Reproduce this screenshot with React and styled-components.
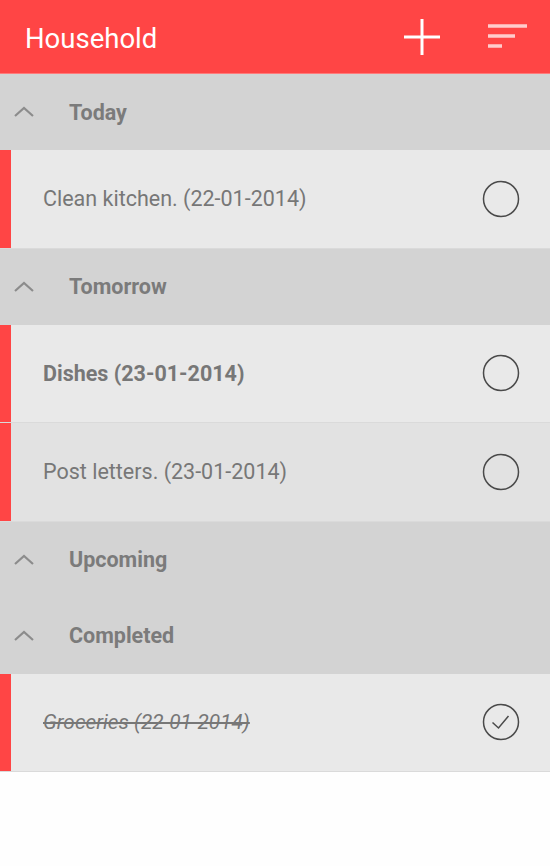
import React from "react"
import styled, { createGlobalStyle } from "styled-components"

const GlobalStyle = createGlobalStyle`
  body {
    margin: 0;
    background: #fefefe;
    font-family: Roboto, "Noto Sans", sans-serif;
  }
`

const Screen = styled.div`
  width: 550px;
  min-height: 866px;
  background: #fefefe;
`

const ActionBar = styled.header`
  height: 73px;
  background: #ff4545;
  border-bottom: 1px solid #ff7b7b;
  display: flex;
  align-items: center;
  padding: 0 23px 0 25px;
`

const Title = styled.h1`
  flex: 1;
  margin: 3px 0 0;
  color: #fff;
  font-size: 27.5px;
  font-weight: 400;
`

const ActionButton = styled.button`
  background: none;
  border: 0;
  padding: 0;
  margin-left: ${p => p.gap || 0}px;
  display: flex;
  align-items: center;
`

const GroupHeader = styled.div`
  height: 76px;
  background: #d3d3d3;
  display: flex;
  align-items: center;
  padding-left: 14px;
`

const GroupTitle = styled.span`
  margin-left: 35px;
  font-size: 21.5px;
  font-weight: 700;
  color: #7b7b7b;
`

const Task = styled.div`
  height: 97.5px;
  background: ${p => (p.pressed ? "#e2e2e2" : "#e9e9e9")};
  border-bottom: 1px solid #dadada;
  display: flex;
  align-items: center;
  padding-right: 30px;
`

const Stripe = styled.div`
  width: 11px;
  align-self: stretch;
  background: #ff4545;
  margin-right: 32px;
`

const TaskText = styled.span`
  flex: 1;
  font-size: ${p => (p.done ? 20.8 : 21.5)}px;
  color: #777;
  font-weight: ${p => (p.bold ? 700 : 400)};
  font-style: ${p => (p.done ? "italic" : "normal")};
  text-decoration: ${p => (p.done ? "line-through" : "none")};
`

const Chevron = () => (
  <svg width="20" height="12" viewBox="0 0 20 12">
    <path d="M1 10 L10 2 L19 10" fill="none" stroke="#8c8c8c" strokeWidth="2.2" />
  </svg>
)

const Check = ({ done }) => (
  <svg width="38" height="38" viewBox="0 0 38 38">
    <circle cx="19" cy="19" r="17.5" fill="none" stroke="#4a4a4a" strokeWidth="1.5" />
    {done && <path d="M10.5 19.5 L16.5 25 L26.5 13" fill="none" stroke="#4a4a4a" strokeWidth="1.5" />}
  </svg>
)

const groups = [
  {
    title: "Today",
    tasks: [{ text: "Clean kitchen. (22-01-2014)" }],
  },
  {
    title: "Tomorrow",
    tasks: [
      { text: "Dishes (23-01-2014)", bold: true },
      { text: "Post letters. (23-01-2014)", pressed: true },
    ],
  },
  { title: "Upcoming", tasks: [] },
  {
    title: "Completed",
    tasks: [{ text: "Groceries (22-01-2014)", done: true }],
  },
]

const App = () => (
  <Screen>
    <GlobalStyle />
    <ActionBar>
      <Title>Household</Title>
      <ActionButton>
        <svg width="36" height="36" viewBox="0 0 36 36">
          <path d="M18 0 V36 M0 18 H36" stroke="#fff" strokeWidth="3" />
        </svg>
      </ActionButton>
      <ActionButton gap={48}>
        <svg width="39" height="26" viewBox="0 0 39 26">
          <path d="M0 2 H39 M0 12 H27 M0 22 H14" stroke="#ffcccc" strokeWidth="3.5" />
        </svg>
      </ActionButton>
    </ActionBar>
    {groups.map(g => (
      <div key={g.title}>
        <GroupHeader>
          <Chevron />
          <GroupTitle>{g.title}</GroupTitle>
        </GroupHeader>
        {g.tasks.map(t => (
          <Task key={t.text} pressed={t.pressed}>
            <Stripe />
            <TaskText bold={t.bold} done={t.done}>{t.text}</TaskText>
            <Check done={t.done} />
          </Task>
        ))}
      </div>
    ))}
  </Screen>
)

export default App
